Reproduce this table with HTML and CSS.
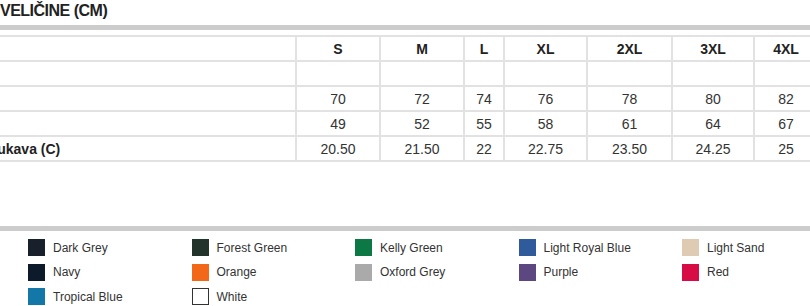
FILE: index.html
```html
<!DOCTYPE html>
<html lang="hr">
<head>
<meta charset="utf-8">
<title>Veličine</title>
<link rel="stylesheet" href="styles.css">
</head>
<body>
<div class="page">
  <h2 class="title">VELIČINE (CM)</h2>
  <div class="bar"></div>
  <table class="sizes">
    <colgroup>
      <col class="c-label">
      <col class="c-s"><col class="c-m"><col class="c-l"><col class="c-xl">
      <col class="c-2xl"><col class="c-3xl"><col class="c-4xl">
    </colgroup>
    <thead>
      <tr><th></th><th>S</th><th>M</th><th>L</th><th>XL</th><th>2XL</th><th>3XL</th><th>4XL</th></tr>
    </thead>
    <tbody>
      <tr><th></th><td></td><td></td><td></td><td></td><td></td><td></td><td></td></tr>
      <tr><th></th><td>70</td><td>72</td><td>74</td><td>76</td><td>78</td><td>80</td><td>82</td></tr>
      <tr><th></th><td>49</td><td>52</td><td>55</td><td>58</td><td>61</td><td>64</td><td>67</td></tr>
      <tr><th>Dužina rukava (C)</th><td>20.50</td><td>21.50</td><td>22</td><td>22.75</td><td>23.50</td><td>24.25</td><td>25</td></tr>
    </tbody>
  </table>
  <div class="bar bar-bottom"></div>
  <ul class="colors">
    <li><span class="sw dark-grey"></span>Dark Grey</li>
    <li><span class="sw forest-green"></span>Forest Green</li>
    <li><span class="sw kelly-green"></span>Kelly Green</li>
    <li><span class="sw light-royal-blue"></span>Light Royal Blue</li>
    <li><span class="sw light-sand"></span>Light Sand</li>
    <li><span class="sw navy"></span>Navy</li>
    <li><span class="sw orange"></span>Orange</li>
    <li><span class="sw oxford-grey"></span>Oxford Grey</li>
    <li><span class="sw purple"></span>Purple</li>
    <li><span class="sw red"></span>Red</li>
    <li><span class="sw tropical-blue"></span>Tropical Blue</li>
    <li><span class="sw white"></span>White</li>
  </ul>
</div>
</body>
</html>
```

FILE: styles.css
```css
html, body {
  margin: 0;
  padding: 0;
  background: #ffffff;
}
body {
  overflow: hidden;
  font-family: "Liberation Sans", Arial, sans-serif;
  color: #222222;
}
.page {
  width: 810px;
}
.title {
  margin: 0;
  font-size: 16px;
  font-weight: bold;
  line-height: 22px;
  color: #222222;
  letter-spacing: -0.5px;
}
.bar {
  height: 5px;
  background: #cccccc;
  margin-top: 3px;
}
.sizes {
  margin-top: 5px;
  margin-left: -68px;
  width: 885px;
  table-layout: fixed;
  border-collapse: collapse;
  font-size: 14px;
}
.c-label { width: 363px; }
.c-s { width: 84px; }
.c-m { width: 84px; }
.c-l { width: 40px; }
.c-xl { width: 83px; }
.c-2xl { width: 85px; }
.c-3xl { width: 82px; }
.c-4xl { width: 64px; }
.sizes th,
.sizes td {
  height: 23px;
  padding: 0;
  border: 2px solid #e2e2e2;
  text-align: center;
  vertical-align: middle;
  line-height: 16px;
  white-space: nowrap;
  overflow: hidden;
}
.sizes thead th {
  font-weight: bold;
}
.sizes tbody th {
  text-align: left;
  font-weight: bold;
  padding-left: 8px;
}
.sizes td {
  font-weight: normal;
  color: #333333;
}
.bar-bottom {
  margin-top: 64px;
}
.colors {
  list-style: none;
  margin: 0;
  padding: 8px 0 0 28px;
  display: grid;
  grid-template-columns: repeat(5, 163.5px);
  row-gap: 7.5px;
}
.colors li {
  display: flex;
  align-items: center;
  gap: 8px;
  height: 17px;
  font-size: 12px;
  color: #333333;
}
.sw {
  width: 17px;
  height: 17px;
  box-sizing: border-box;
  flex: none;
}
.dark-grey { background: #18202b; }
.forest-green { background: #22332b; }
.kelly-green { background: #0b7846; }
.light-royal-blue { background: #2f5a9c; }
.light-sand { background: #dfcbb3; }
.navy { background: #0c1a2b; }
.orange { background: #f26818; }
.oxford-grey { background: #aaaaaa; }
.purple { background: #5c4781; }
.red { background: #d70c45; }
.tropical-blue { background: #1378a8; }
.white { background: #ffffff; border: 1.5px solid #333333; }
```
